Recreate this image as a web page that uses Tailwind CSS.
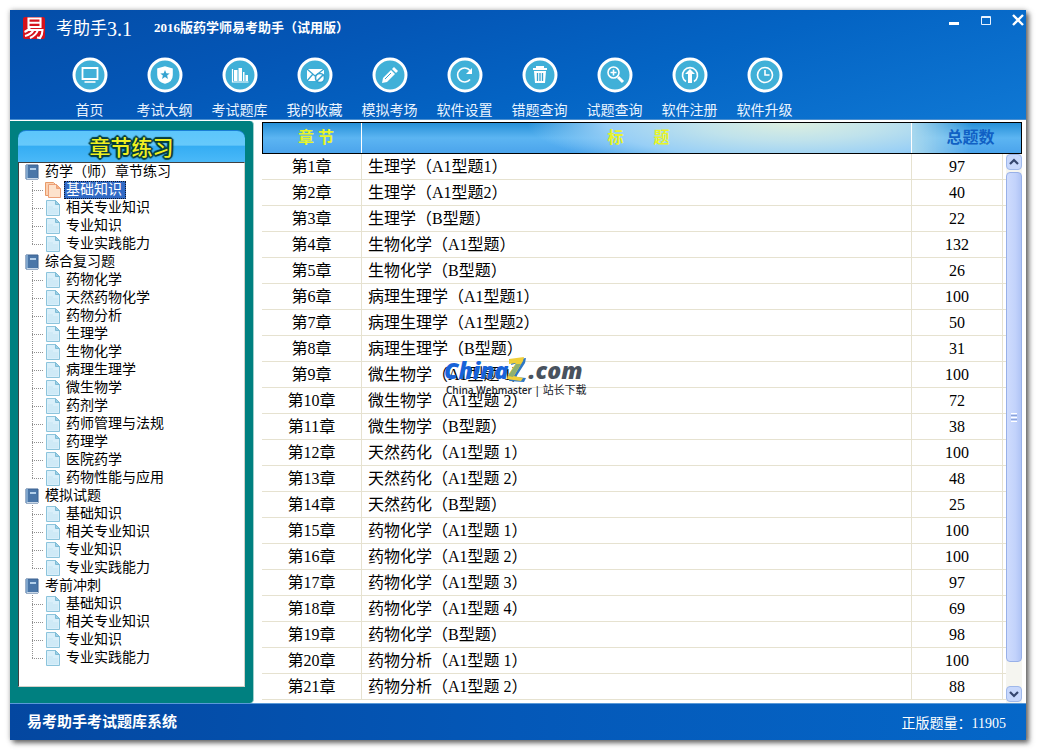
<!DOCTYPE html>
<html lang="zh-CN">
<head>
<meta charset="utf-8">
<meta name="viewport" content="width=device-width, initial-scale=1">
<title>考助手3.1</title>
<script src="https://cdn.jsdelivr.net/npm/@tailwindcss/browser@4"></script>
</head>
<body class="bg-white font-['Liberation_Serif','Noto_Sans_CJK_SC',sans-serif] text-black">
<div class="flex min-h-screen pb-[11px] pl-[10px] pr-[11px] pt-[10px]">
<div class="flex flex-1 flex-col bg-white shadow-[3px_3px_5px_#303030b0,0_0_5px_#00000040]">

  <header class="flex h-[110px] flex-col border-b border-[#4a8fd0] bg-[linear-gradient(165deg,#044da8_0%,#0456b6_30%,#0464c4_60%,#0f78d4_100%)] text-white">
    <div class="flex h-9 shrink-0 items-center pl-3">
      <svg class="h-6 w-6" viewBox="0 0 24 24" fill="none" aria-hidden="true">
        <rect x="1" y="1" width="22" height="22" rx="2" fill="#d5121c"/>
        <path d="M6.500 2.500h12v8.500h-12zM6.500 6.700h12M8 11c-1 2.500-3 4-5.500 5M6.500 14h14c0 4-1 6-2.500 8l-3-.5M11.500 14c-1.500 3-4.500 5-8.500 6M16 14c-1.500 4-4.500 6.500-8 8" stroke="#fff" stroke-width="2.100"/>
      </svg>
      <h1 class="ml-2.5 flex items-center pt-0.5 text-[17px] leading-6">考助手<span class="text-xl leading-6">3.1</span></h1>
      <p class="ml-[22px] text-[13px] font-bold leading-5">2016版药学师易考助手（试用版）</p>
      <div class="mb-4 ml-auto flex items-center gap-4">
        <button type="button" aria-label="最小化" class="h-4 w-4"><svg viewBox="0 0 16 16"><path d="M3 11.500h10" stroke="#fff" stroke-width="3"/></svg></button>
        <button type="button" aria-label="最大化" class="h-4 w-4"><svg viewBox="0 0 16 16"><path d="M3.500 4.500h9v8h-9zM3 5.500h10" stroke="#e8f2ff" fill="none"/></svg></button>
        <button type="button" aria-label="关闭" class="h-4 w-4"><svg viewBox="0 0 16 16"><path d="M3 3l10 10M13 3L3 13" stroke="#fff" stroke-width="2.400"/></svg></button>
      </div>
    </div>
    <nav id="toolbar" aria-label="工具栏" class="flex pl-[42px] pt-[11px]"></nav>
  </header>

  <main class="flex flex-1 gap-2 pr-1 pt-px">
    <aside class="w-[244px] shrink-0 rounded-r border-r border-[#9fd0cc] bg-[#008080] px-2 pb-4 pt-[9px]">
      <div class="flex h-full flex-col">
        <h2 class="h-8 rounded-t-lg border-t border-[#1b7fd6] bg-[linear-gradient(#5cc6fb_0%,#66c9fb_45%,#35adf3_50%,#4ab9f8_100%)] text-center font-['Noto_Sans_CJK_SC',sans-serif] text-[21px] font-medium leading-[31px] text-[#f0f020] [text-shadow:1px_1px_1px_#063c3c,-1px_-1px_1px_#063c3c,1px_-1px_1px_#063c3c,-1px_1px_1px_#063c3c,2px_0_1px_#063c3c,-2px_0_1px_#063c3c,0_2px_1px_#063c3c,0_-2px_1px_#063c3c]">章节练习</h2>
        <ul id="tree" class="flex-1 border border-b-[#d4d0c8] border-l-[#404040] border-r-[#d4d0c8] border-t-[#404040] bg-white pl-1.5 text-sm leading-[18px]"></ul>
      </div>
    </aside>

    <section class="relative flex-1 pt-px">
      <table class="w-full table-fixed border-separate border-spacing-0 text-base leading-[30px]">
        <colgroup><col class="w-[100px]"><col><col class="w-[91px]"><col class="w-[19px]"></colgroup>
        <thead class="text-[#e8f428]">
          <tr>
            <th scope="col" class="border-y border-l border-black bg-[linear-gradient(#2690d8,#5cb5f2_50%,#4ba4ec)] p-0"><div class="border-r border-white pl-2">章 节</div></th>
            <th scope="col" class="border-y border-black bg-[radial-gradient(ellipse_48%_170%_at_78%_0%,#dcefe0_0%,#bfe2ec_35%,#98cff6_70%,transparent_100%),linear-gradient(#2690d8,#5cb5f2_50%,#4ba4ec)] p-0"><div class="flex justify-center gap-[30px] border-r border-white pl-1"><span>标</span><span>题</span></div></th>
            <th scope="col" colspan="2" class="border-y border-r border-black bg-[linear-gradient(90deg,#a8d8ee_0%,transparent_55%),linear-gradient(#2690d8,#5cb5f2_50%,#4ba4ec)] p-0 pl-2 text-[#1060c4]">总题数</th>
          </tr>
        </thead>
        <tbody id="rows" class="leading-6"></tbody>
      </table>

      <div class="absolute bottom-0 right-0 top-[33px] flex w-4 flex-col gap-0.5 bg-[#f5f5f0]" role="scrollbar" aria-label="滚动" aria-controls="rows" aria-valuenow="0">
        <button type="button" aria-label="向上" class="h-4 rounded-sm border border-[#9fb8ea] bg-[#c8d8fc]"><svg viewBox="0 0 14 14"><path d="M3 9l4-4 4 4" fill="none" stroke="#35466e" stroke-width="2.200"/></svg></button>
        <div class="mb-[22px] flex flex-1 flex-col items-center justify-center gap-px rounded-sm border border-[#98b0e8] bg-[linear-gradient(90deg,#cfdcfd,#c2d2fb_60%,#b0c4f5)]">
          <span class="h-px w-1.5 bg-white"></span><span class="h-px w-1.5 bg-[#8ca4d8]"></span><span class="h-px w-1.5 bg-white"></span><span class="h-px w-1.5 bg-[#8ca4d8]"></span><span class="h-px w-1.5 bg-white"></span>
        </div>
        <button type="button" aria-label="向下" class="mb-px h-4 rounded-sm border border-[#9fb8ea] bg-[#c8d8fc]"><svg viewBox="0 0 14 14"><path d="M3 5l4 4 4-4" fill="none" stroke="#35466e" stroke-width="2.200"/></svg></button>
      </div>

      <div class="absolute left-[182px] top-[235px] font-['Open_Sans','Noto_Sans_CJK_SC',sans-serif]">
        <div class="flex items-center text-[23px] font-extrabold italic leading-7 text-[#1763d8]">
          <span>China</span>
          <svg class="-ml-1 mr-0.5 h-7 w-[22px]" viewBox="0 0 22 28" aria-hidden="true">
            <path d="M7 4l14-2-1 5L11 21l10 1-2 4-15-1 1-4L13 7 6 9z" fill="#2f78c4"/>
            <path d="M4 3l15-2-1 4L9 20l9 2-2 3-14-2 1-4L11 7 4 8z" fill="#f0cf3a"/>
            <path d="M11 8l5 0-8 13-5-1z" fill="#8fb070"/>
          </svg>
          <span class="text-[#49525e]">.com</span>
        </div>
        <p class="whitespace-nowrap pl-0.5 text-[10px] font-semibold leading-3 text-[#20242c]">China Webmaster | <span class="text-[11px] font-normal">站长下载</span></p>
      </div>
    </section>
  </main>

  <footer class="flex h-[37px] items-center justify-between border-t border-[#5a9ad8] bg-[linear-gradient(90deg,#0447a0,#0458b8_50%,#0567c8)] pl-[17px] pr-5 text-white">
    <strong class="text-[15px]">易考助手考试题库系统</strong>
    <span class="pt-1 text-sm">正版题量：11905</span>
  </footer>
</div>
</div>

<script>
const tools = [
  ['首页', '<path d="M10.500 11h15v11h-15z" stroke-width="1.800"/><path d="M12.500 25h11"/>'],
  ['考试大纲', '<path d="M11 12l7-2 7 2v6c0 4-3 7-7 8-4-1-7-4-7-8z" fill="#fff"/><path d="M18 13l1.300 3.200 3.400.2-2.600 2.100.9 3.400-3-1.900-3 1.900.9-3.400-2.600-2.100 3.400-.2z" fill="#36a3d0" stroke="none"/>'],
  ['考试题库', '<path d="M10.500 12v13h16" stroke-width="1.200"/><path d="M12 13h3.500v11H12zM16.500 11h3.500v13h-3.500zM21 15h1.500v9H21zM23.500 18h2.500v6h-2.500z" fill="#fff" stroke="none"/>'],
  ['我的收藏', '<path d="M10 12h17v12H10z" fill="#fff" stroke="none"/><path d="M10 12l8 7 9-7M10 24l6-7" stroke="#36a3d0" stroke-width="1.300"/><circle cx="23" cy="21" r="4.500" fill="#fff" stroke="#36a3d0"/><path d="M20 24l6-6" stroke="#36a3d0"/>'],
  ['模拟考场', '<path d="M10 26l1-5 8-8 4 4-8 8zM20 12l2-2 4 4-2 2z" fill="#fff" stroke="none"/><path d="M13 22l6-6" stroke="#36a3d0" stroke-width="1"/>'],
  ['软件设置', '<path d="M23 22.500a7 7 0 1 1 0-9"/><path d="M25 11v6h-6z" fill="#fff" stroke="none"/>'],
  ['错题查询', '<path d="M11 12h14M15 11v-1h6v1" stroke-width="2"/><path d="M12 14h12l-1 12H13z" fill="#fff" stroke="none"/><path d="M15.500 16v8M18 16v8M20.500 16v8" stroke="#36a3d0" stroke-width="1.300"/>'],
  ['试题查询', '<circle cx="16.500" cy="15.500" r="5.500"/><path d="M13.500 15.500h6M16.500 12.500v6"/><path d="M21 20l5 5" stroke-width="3"/>'],
  ['软件注册', '<path d="M14 24.500a7.500 7.500 0 1 1 8 0"/><path d="M18 12l5 5h-3v9h-4v-9h-3z" fill="#fff" stroke="none"/>'],
  ['软件升级', '<circle cx="18" cy="18" r="7.500"/><path d="M18 13v5h4.500"/>'],
];
document.getElementById('toolbar').innerHTML = tools.map(([label, art]) => `
  <button type="button" class="flex w-[75px] flex-col items-center gap-2.5 whitespace-nowrap">
    <svg class="h-9 w-9" viewBox="0 0 36 36" fill="none" stroke="#fff" stroke-width="1.600" aria-hidden="true"><circle cx="18" cy="18" r="16" fill="#40b0d8" stroke-width="3"/>${art}</svg>
    <span class="text-sm leading-4 text-[#eaf4ff]">${label}</span>
  </button>`).join('');

const tree = [
  ['药学（师）章节练习', ['基础知识', '相关专业知识', '专业知识', '专业实践能力']],
  ['综合复习题', ['药物化学', '天然药物化学', '药物分析', '生理学', '生物化学', '病理生理学', '微生物学', '药剂学', '药师管理与法规', '药理学', '医院药学', '药物性能与应用']],
  ['模拟试题', ['基础知识', '相关专业知识', '专业知识', '专业实践能力']],
  ['考前冲刺', ['基础知识', '相关专业知识', '专业知识', '专业实践能力']],
];
const book = '<svg class="h-4 w-3.5" viewBox="0 0 14 16" aria-hidden="true"><path d="M1 1h12v14H1z" fill="#4a76a8" stroke="#3a6190"/><path d="M1 1h2v14H1z" fill="#7fa5cc"/><path d="M5 4h6v2H5z" fill="#b4d0ea"/><path d="M2 14.500h11" stroke="#c8d8e8"/></svg>';
const page = '<svg class="h-4 w-4" viewBox="0 0 16 16" aria-hidden="true"><path d="M1.500.500h9l4 4v11h-13z" fill="#d9effa" stroke="#8cc4dc"/><path d="M10.500.500v4h4z" fill="#9fd2e8" stroke="#7fbcd6"/><path d="M3 7h5M3 9h10M3 11h10M3 13h10" stroke="#c4e4f3"/></svg>';
const openPage = '<svg class="h-4 w-4" viewBox="0 0 16 16" aria-hidden="true"><path d="M.5.500h8l3 3v10H.5z" fill="#fbd0b0" stroke="#e89a68"/><path d="M3.500 2.500h8l4 4v9h-12z" fill="#fde2cc" stroke="#eca078"/><path d="M11.500 2.500v4h4z" fill="#f6b080" stroke="#eca078"/></svg>';
document.getElementById('tree').innerHTML = tree.map(([name, items], g) => `
  <li>
    <button type="button" class="flex h-[18px] items-center gap-1.5 whitespace-nowrap">${book}<span>${name}</span></button>
    <ul>${items.map((t, i) => {
      const on = g === 0 && i === 0;
      const drop = i === items.length - 1 ? 9 : 18;
      return `<li><button type="button" class="flex h-[18px] items-center whitespace-nowrap pl-[7px]">
        <svg class="mr-px h-[18px] w-3" viewBox="0 0 12 18" aria-hidden="true"><path d="M.5 0V${drop}M0 9.500h12" stroke="#909090" stroke-dasharray="1 1"/></svg>
        ${on ? openPage : page}
        <span class="${on ? 'ml-[3px] bg-[#316ac5] pl-0.5 pr-1 text-white outline-1 -outline-offset-1 outline-dotted outline-[#101828]' : 'ml-[5px]'}">${t}</span></button></li>`;
    }).join('')}</ul>
  </li>`).join('');

const rows = [
  ['生理学（A1型题1）', 97], ['生理学（A1型题2）', 40], ['生理学（B型题）', 22],
  ['生物化学（A1型题）', 132], ['生物化学（B型题）', 26],
  ['病理生理学（A1型题1）', 100], ['病理生理学（A1型题2）', 50], ['病理生理学（B型题）', 31],
  ['微生物学（A1型题 1）', 100], ['微生物学（A1型题 2）', 72], ['微生物学（B型题）', 38],
  ['天然药化（A1型题 1）', 100], ['天然药化（A1型题 2）', 48], ['天然药化（B型题）', 25],
  ['药物化学（A1型题 1）', 100], ['药物化学（A1型题 2）', 100], ['药物化学（A1型题 3）', 97], ['药物化学（A1型题 4）', 69], ['药物化学（B型题）', 98],
  ['药物分析（A1型题 1）', 100], ['药物分析（A1型题 2）', 88],
];
document.getElementById('rows').innerHTML = rows.map(([title, n], i) => `
  <tr class="h-[26px]">
    <td class="border-b border-r border-[#e6e2d0] p-0 text-center">第${i + 1}章</td>
    <td class="border-b border-r border-[#e6e2d0] p-0 pl-1.5">${title}</td>
    <td class="border-b border-r border-[#e6e2d0] p-0 text-center">${n}</td>
    <td class="border-b border-[#e6e2d0] p-0"></td>
  </tr>`).join('');
</script>
</body>
</html>
